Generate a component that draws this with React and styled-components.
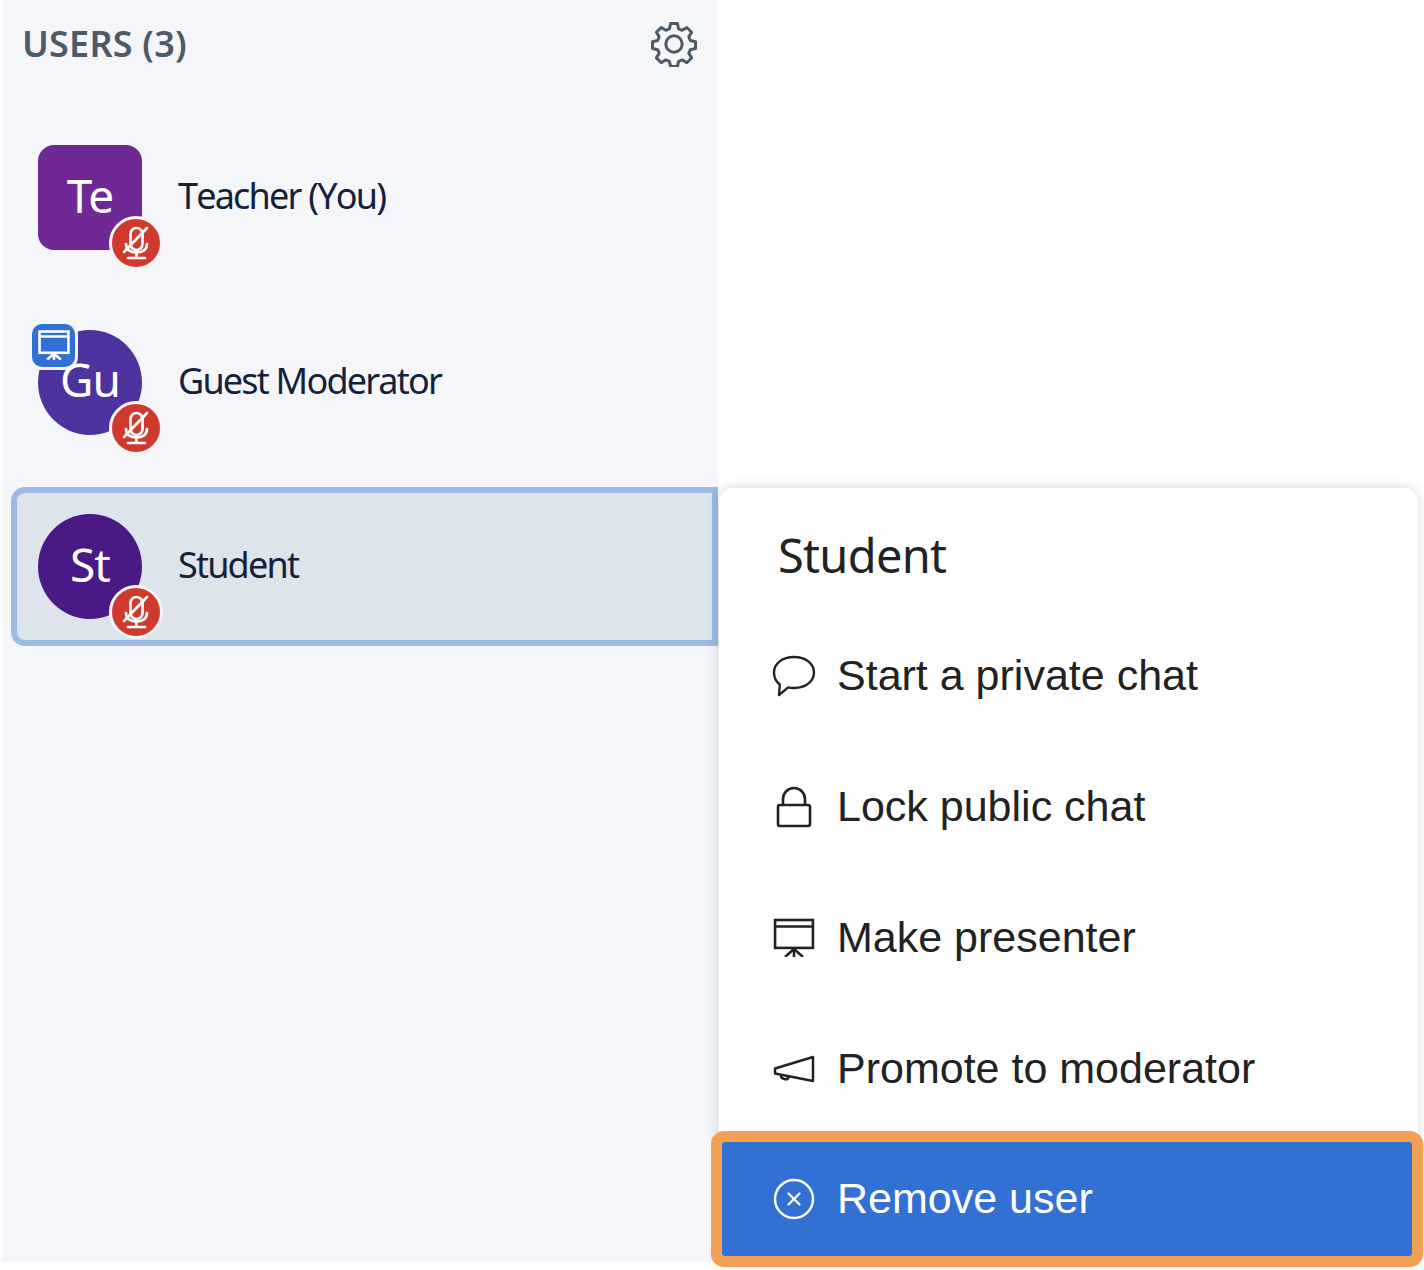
import React from "react";
import styled, { createGlobalStyle } from "styled-components";

const users = [
  { id: 1, name: "Teacher (You)", initials: "Te", color: "#6f2894", square: true },
  { id: 2, name: "Guest Moderator", initials: "Gu", color: "#4e32a0", presenter: true },
  { id: 3, name: "Student", initials: "St", color: "#491a86", selected: true },
];

const GearIcon = () => (
  <svg width="46" height="46" viewBox="0 0 46 46" fill="none" stroke="#4e5a66" strokeWidth="3" strokeLinejoin="round">
    <path d="M19.6 2.6h6.8l1.2 5.2 3.6 1.5 4.6-2.8 4.8 4.8-2.8 4.6 1.5 3.6 5.2 1.2v6.8l-5.2 1.2-1.5 3.6 2.8 4.6-4.8 4.8-4.6-2.8-3.6 1.5-1.2 5.2h-6.8l-1.2-5.2-3.6-1.5-4.6 2.8-4.8-4.8 2.8-4.6-1.5-3.6-5.2-1.2v-6.8l5.2-1.2 1.5-3.6-2.8-4.6 4.8-4.8 4.6 2.8 3.6-1.5z" />
    <circle cx="23" cy="23" r="8.2" />
  </svg>
);

const MicOffIcon = () => (
  <svg width="30" height="34" viewBox="0 0 30 34" fill="none" stroke="#fff" strokeWidth="2.7" strokeLinecap="round">
    <path d="M9.500 18V8a6 6 0 0 1 12 0v10a6 6 0 0 1-12 0z" />
    <path d="M5 18c0 5.500 4.500 8.500 10.500 8.500S26 23.500 26 18" />
    <path d="M15.500 26.500V31M7 32h17" />
    <path d="M3 26L26 2" />
  </svg>
);

const PresenterIcon = ({ color, size = 42, weight = 2.6 }) => (
  <svg width={size} height={size * 0.95} viewBox="0 0 42 40" fill="none" stroke={color} strokeWidth={weight}>
    <rect x="2" y="2" width="38" height="28" />
    <path d="M2 8.500h38M21 30v9M21 31l-9 8M21 31l9 8" />
  </svg>
);

const ChatIcon = () => (
  <svg width="44" height="42" viewBox="0 0 44 42" fill="none" stroke="#222" strokeWidth="2.400" strokeLinejoin="round">
    <path d="M22 2c11.500 0 20 6.500 20 15.500S33.500 33 22 33c-2 0-4-.2-5.800-.6L7 40l.8-10.500C4 26.500 2 22.300 2 17.500 2 8.500 10.500 2 22 2z" />
  </svg>
);

const LockIcon = () => (
  <svg width="36" height="42" viewBox="0 0 36 42" fill="none" stroke="#222" strokeWidth="2.600">
    <rect x="2" y="19" width="32" height="21" rx="2" />
    <path d="M7 19v-6a11 11 0 0 1 22 0v6" />
  </svg>
);

const MegaphoneIcon = () => (
  <svg width="42" height="28" viewBox="0 0 42 28" fill="none" stroke="#222" strokeWidth="2.500" strokeLinejoin="round">
    <path d="M40 2v24L2 18.500v-5z" />
    <path d="M8 19.500c-.5 5 6.500 6.500 8 2" />
  </svg>
);

const RemoveIcon = () => (
  <svg width="42" height="42" viewBox="0 0 42 42" fill="none" stroke="#fff" strokeWidth="2.400" strokeLinecap="round">
    <circle cx="21" cy="21" r="19" />
    <path d="M15.500 15.500l11 11M26.500 15.500l-11 11" />
  </svg>
);

const menuItems = [
  { id: "chat", label: "Start a private chat", icon: <ChatIcon /> },
  { id: "lock", label: "Lock public chat", icon: <LockIcon /> },
  { id: "presenter", label: "Make presenter", icon: <PresenterIcon color="#222" /> },
  { id: "promote", label: "Promote to moderator", icon: <MegaphoneIcon /> },
];

const App = () => {
  return (
    <Page>
      <GlobalStyle />
      <Sidebar>
        <Header>
          <Title>USERS (3)</Title>
          <GearIcon />
        </Header>
        <UserList>
          {users.map((user) => (
            <UserRow key={user.id} $selected={user.selected}>
              <Avatar $color={user.color} $square={user.square}>
                <Initials>{user.initials}</Initials>
                {user.presenter && (
                  <PresenterBadge>
                    <PresenterIcon color="#fff" size={32} weight={3.4} />
                  </PresenterBadge>
                )}
                <MuteBadge>
                  <MicOffIcon />
                </MuteBadge>
              </Avatar>
              <UserName>{user.name}</UserName>
            </UserRow>
          ))}
        </UserList>
      </Sidebar>
      <Popup>
        <PopupTitle>Student</PopupTitle>
        {menuItems.map((item) => (
          <MenuItem key={item.id}>
            <MenuIcon>{item.icon}</MenuIcon>
            <MenuLabel>{item.label}</MenuLabel>
          </MenuItem>
        ))}
        <ActiveItem>
          <MenuIcon>
            <RemoveIcon />
          </MenuIcon>
          <MenuLabel>Remove user</MenuLabel>
        </ActiveItem>
      </Popup>
    </Page>
  );
};

export default App;

const GlobalStyle = createGlobalStyle`
  html, body {
    margin: 0;
    padding: 0;
    background: #fff;
  }
  * {
    box-sizing: border-box;
  }
`;

const Page = styled.div`
  position: relative;
  width: 1424px;
  height: 1270px;
  padding-left: 2px;
  overflow: hidden;
  font-family: "Noto Sans", "Open Sans", sans-serif;
`;

const Sidebar = styled.aside`
  width: 716px;
  height: 1262px;
  background: #f4f6fa;
`;

const Header = styled.header`
  height: 118px;
  padding: 21px 21px 0 20px;
  display: flex;
  justify-content: space-between;
  align-items: flex-start;
`;

const Title = styled.h2`
  margin: 0;
  font-size: 36px;
  line-height: 46px;
  font-weight: 600;
  letter-spacing: 0.2px;
  color: #4e5a66;
`;

const UserList = styled.div`
  display: flex;
  flex-direction: column;
  gap: 25.5px;
  padding-left: 9px;
`;

const UserRow = styled.div`
  height: 159px;
  display: flex;
  align-items: center;
  gap: 36px;
  padding-left: 21px;
  border: 6px solid ${(p) => (p.$selected ? "#9bbae5" : "transparent")};
  border-radius: 14px 0 0 14px;
  background: ${(p) => (p.$selected ? "#dde4ec" : "transparent")};
`;

const Avatar = styled.div`
  position: relative;
  flex: none;
  width: 104px;
  height: 105px;
  display: flex;
  align-items: center;
  justify-content: center;
  border-radius: ${(p) => (p.$square ? "16px" : "50%")};
  background: ${(p) => p.$color};
  color: #fff;
  font-size: 46px;
`;

const Initials = styled.span`
  line-height: 1;
  margin-top: -6px;
  letter-spacing: -1px;
`;

const MuteBadge = styled.span`
  position: absolute;
  right: -21px;
  bottom: -20px;
  width: 54px;
  height: 54px;
  display: flex;
  align-items: center;
  justify-content: center;
  border-radius: 50%;
  border: 3px solid #f4f6fa;
  background: #cf3a2d;
`;

const PresenterBadge = styled.span`
  position: absolute;
  left: -9px;
  top: -9px;
  width: 49px;
  height: 49px;
  display: flex;
  align-items: center;
  justify-content: center;
  border-radius: 13px;
  border: 3px solid #f4f6fa;
  background: #3370d3;
`;

const UserName = styled.span`
  margin-top: -4px;
  font-size: 36px;
  font-kerning: none;
  letter-spacing: -1.800px;
  color: #14213a;
`;

const Popup = styled.div`
  position: absolute;
  left: 719px;
  top: 488px;
  width: 699px;
  height: 774px;
  background: #fff;
  border-radius: 14px 14px 0 0;
  box-shadow: 0 0 12px rgba(60, 70, 90, 0.22);
  display: flex;
  flex-direction: column;
  font-family: "Liberation Sans", Arial, sans-serif;
`;

const PopupTitle = styled.h3`
  margin: 0;
  height: 122px;
  padding: 37px 0 0 59px;
  font-family: "Noto Sans", "Open Sans", sans-serif;
  font-size: 47px;
  line-height: 60px;
  font-weight: 400;
  letter-spacing: -0.700px;
  color: #222;
`;

const MenuItem = styled.div`
  flex: none;
  height: 131px;
  display: flex;
  align-items: center;
  gap: 21px;
  padding-left: 53px;
  font-size: 43px;
  color: #222;
`;

const ActiveItem = styled(MenuItem)`
  height: 114px;
  margin: 8px 6px 0 3px;
  padding-left: 50px;
  border-radius: 2px;
  outline: 11px solid #f2a154;
  background: #3370d3;
  color: #fff;
`;

const MenuIcon = styled.span`
  width: 44px;
  display: flex;
  justify-content: center;
  align-items: center;
`;

const MenuLabel = styled.span`
  margin-top: -1px;
`;
